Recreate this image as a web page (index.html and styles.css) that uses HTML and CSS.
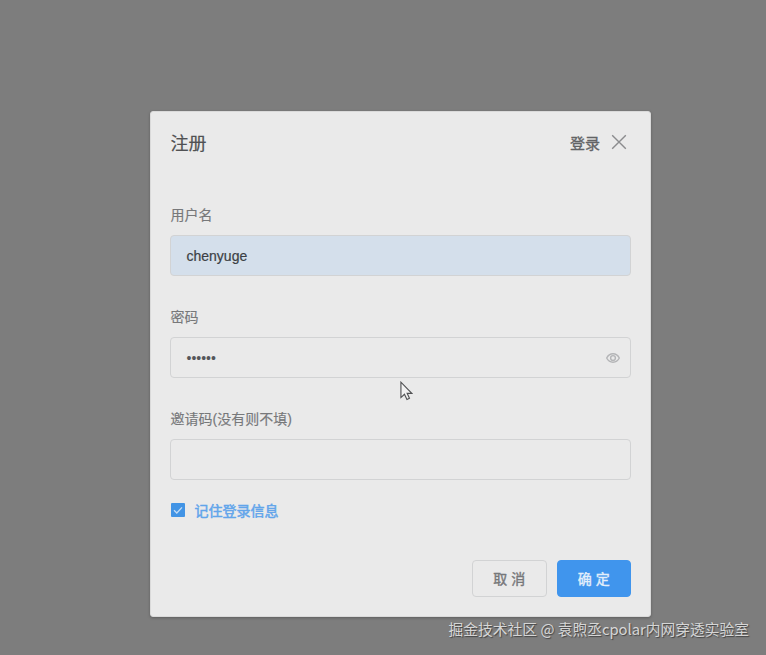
FILE: index.html
```html
<!DOCTYPE html>
<html lang="zh-CN">
<head>
<meta charset="utf-8">
<title>注册</title>
<link rel="stylesheet" href="styles.css">
</head>
<body>
<main class="dialog">
  <header class="head">
    <h1>注册</h1>
    <a class="login">登录</a>
    <svg class="close" viewBox="0 0 16 16"><path d="M1.2 1.2 14.8 14.8M14.8 1.2 1.2 14.8"/></svg>
  </header>
  <form class="form">
    <div class="field">
      <div class="label">用户名</div>
      <div class="input filled"><span>chenyuge</span></div>
    </div>
    <div class="field">
      <div class="label">密码</div>
      <div class="input"><span class="dots">••••••</span>
        <svg class="eye" viewBox="0 0 14 10"><path d="M.7 5C2.2 2 4.3.8 7 .8S11.800 2 13.300 5C11.800 8 9.700 9.200 7 9.200S2.200 8 .7 5Z"/><circle cx="7" cy="5" r="2.400"/></svg>
      </div>
    </div>
    <div class="field">
      <div class="label">邀请码(没有则不填)</div>
      <div class="input"></div>
    </div>
    <div class="remember">
      <span class="check"><svg viewBox="0 0 14 14"><path d="M3 7.200 5.800 10 11 4.400"/></svg></span>
      <span class="remember-text">记住登录信息</span>
    </div>
    <div class="actions">
      <div class="btn">取 消</div>
      <div class="btn primary">确 定</div>
    </div>
  </form>
</main>
<svg class="cursor" viewBox="0 0 14 22"><path d="M1 1V17.500L4.800 14 7.500 19.500 10.200 18.200 7.700 13H12.700Z"/></svg>
<div class="watermark">掘金技术社区 @ 袁煦丞cpolar内网穿透实验室</div>
</body>
</html>
```
FILE: styles.css
```css
* { box-sizing: border-box; }
body {
  margin: 0;
  height: 655px;
  padding: 111px 0 0 150px;
  overflow: hidden;
  background: #7d7d7d;
  font-family: "Liberation Sans", "Noto Sans CJK SC", sans-serif;
  font-size: 14px;
  color: #77787a;
}
.dialog {
  width: 501px;
  height: 506px;
  padding: 0 20px 0 19.500px;
  border: 1px solid #dadada;
  border-radius: 3px;
  background: #eaeaea;
  box-shadow: 0 1px 3px rgba(0, 0, 0, .25);
}
.head {
  display: flex;
  align-items: center;
  height: 60px;
}
h1 {
  margin: 0;
  font-size: 18px;
  font-weight: 400;
  color: #505153;
  -webkit-text-stroke: .2px;
}
.login {
  margin-left: auto;
  font-size: 15px;
  color: #626365;
  -webkit-text-stroke: .35px;
}
.close {
  width: 16px;
  height: 16px;
  margin: 0 3px 0 11px;
  fill: none;
  stroke: #8b8c8e;
  stroke-width: 1.4;
}
.form { padding-top: 23px; }
.field { height: 102px; }
.label {
  height: 40px;
  line-height: 41px;
  -webkit-text-stroke: .15px;
}
.input {
  display: flex;
  align-items: center;
  justify-content: space-between;
  height: 41px;
  margin: 0 -1px 0 -.5px;
  padding: 0 10px 0 15.500px;
  border: 1px solid #d2d3d4;
  border-radius: 4px;
  color: #3c3f45;
}
.filled {
  background: #d4dfeb;
  -webkit-text-stroke: .2px;
}
.dots {
  font-size: 14px;
  color: #55565a;
}
.eye {
  width: 14px;
  height: 10px;
  fill: none;
  stroke: #b4b5b7;
  stroke-width: 1.4;
}
.remember {
  display: flex;
  align-items: center;
  gap: 10px;
  height: 20px;
  margin-top: -1px;
  color: #62a5ea;
}
.remember-text {
  margin-top: -1px;
  -webkit-text-stroke: .5px;
}
.check {
  width: 14px;
  height: 14px;
  border-radius: 1px;
  background: #4294e5;
}
.check svg {
  display: block;
  fill: none;
  stroke: #c3dcf5;
  stroke-width: 1.3;
}
.actions {
  display: flex;
  justify-content: flex-end;
  gap: 10px;
  margin: 40px -1px 0 0;
}
.btn {
  width: 74.500px;
  height: 37px;
  border: 1px solid #d2d3d4;
  border-radius: 4px;
  line-height: 36px;
  text-align: center;
  -webkit-text-stroke: .4px;
}
.primary {
  border-color: #4095ed;
  background: #4095ed;
  color: #e2eefb;
}
.cursor {
  position: absolute;
  left: 400px;
  top: 381px;
  width: 13px;
  height: 21px;
  fill: #f2f2f2;
  stroke: #505153;
  stroke-width: 1.2;
}
.watermark {
  position: absolute;
  right: 17px;
  top: 618px;
  font-family: "Noto Sans CJK SC", sans-serif;
  font-size: 14.750px;
  line-height: 22px;
  white-space: nowrap;
  color: #d6d6d6;
  text-shadow: 1px 1px 1px #444;
}
```
